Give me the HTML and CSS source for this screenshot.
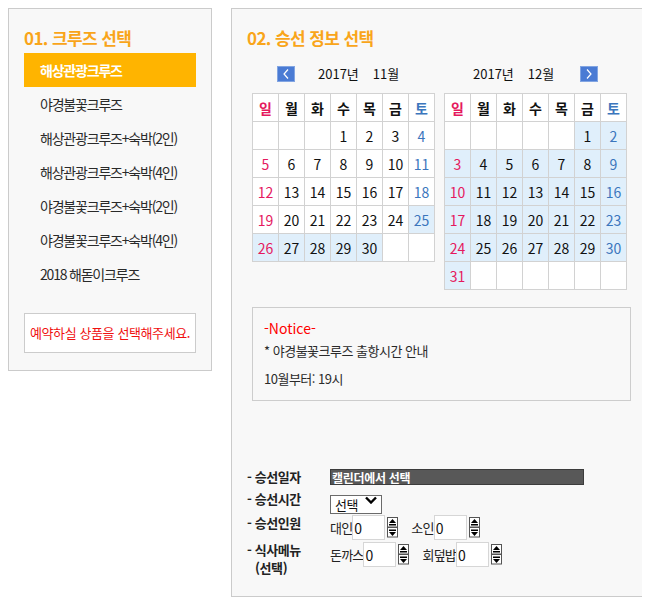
FILE: index.html
```html
<!DOCTYPE html>
<html lang="ko">
<head>
  <meta charset="UTF-8" />
  <title>크루즈 예약</title>
  <meta name="viewport" content="width=device-width, initial-scale=1.0" />
  <link rel="stylesheet" href="styles.css">
</head>
<body>
  <div class="wrap">
    <div class="panel cruise">
      <h2 class="step-title">01. 크루즈 선택</h2>
      <ul class="cruise-list">
        <li class="active">해상관광크루즈</li>
        <li>야경불꽃크루즈</li>
        <li>해상관광크루즈+숙박(2인)</li>
        <li>해상관광크루즈+숙박(4인)</li>
        <li>야경불꽃크루즈+숙박(2인)</li>
        <li>야경불꽃크루즈+숙박(4인)</li>
        <li>2018 해돋이크루즈</li>
      </ul>
      <div class="pick-msg">예약하실 상품을 선택해주세요.</div>
    </div>

    <div class="panel boarding">
      <h2 class="step-title step-title-cal">02. 승선 정보 선택</h2>

      <div class="cals">
        <div class="cal">
          <div class="cal-nav cal-nav-prev">
            <button class="nav-btn">
              <svg width="6" height="10" viewBox="0 0 6 10"><polyline points="5,0.5 1,5 5,9.5" fill="none" stroke="#fff" stroke-width="1.2"/></svg>
            </button>
            <span class="cal-title">2017년<span class="cal-month">11월</span></span>
          </div>
          <table class="cal-table" data-year="2017" data-month="11" data-from="25"></table>
        </div>
        <div class="cal">
          <div class="cal-nav cal-nav-next">
            <span class="cal-title">2017년<span class="cal-month">12월</span></span>
            <button class="nav-btn">
              <svg width="6" height="10" viewBox="0 0 6 10"><polyline points="1,0.5 5,5 1,9.5" fill="none" stroke="#fff" stroke-width="1.2"/></svg>
            </button>
          </div>
          <table class="cal-table" data-year="2017" data-month="12" data-from="1"></table>
        </div>
      </div>

      <div class="notice">
        <div class="notice-title">-Notice-</div>
        <p>* 야경불꽃크루즈 출항시간 안내</p>
        <p class="notice-time">10월부터: 19시</p>
      </div>

      <div class="order-form">
        <div class="form-label">- 승선일자</div>
        <div class="field">
          <input class="date-input" type="text" value="캘린더에서 선택" readonly />
        </div>

        <div class="form-label">- 승선시간</div>
        <div class="field">
          <span class="select-wrap">
            <select class="time-select"><option>선택</option></select>
            <svg class="select-arrow" width="12" height="8" viewBox="0 0 12 8"><polyline points="1,1.5 6,6.5 11,1.5" fill="none" stroke="#000" stroke-width="2.4"/></svg>
          </span>
        </div>

        <div class="form-label">- 승선인원</div>
        <div class="field">
          <span class="num-group">
            <span class="num-label">대인</span><input class="num" type="text" value="0" /><span class="spin"></span>
          </span>
          <span class="num-group">
            <span class="num-label">소인</span><input class="num" type="text" value="0" /><span class="spin"></span>
          </span>
        </div>

        <div class="form-label">- 식사메뉴<span class="sub">(선택)</span></div>
        <div class="field">
          <span class="num-group">
            <span class="num-label">돈까스</span><input class="num" type="text" value="0" /><span class="spin"></span>
          </span>
          <span class="num-group">
            <span class="num-label">회덮밥</span><input class="num" type="text" value="0" /><span class="spin"></span>
          </span>
        </div>
      </div>
    </div>
  </div>

  <script>
    const days = ['일', '월', '화', '수', '목', '금', '토'];
    const dayClass = (i) => i === 0 ? 'sun' : i === 6 ? 'sat' : '';

    document.querySelectorAll('.cal-table').forEach((table) => {
      const year = +table.dataset.year;
      const month = +table.dataset.month;
      const from = +table.dataset.from;
      const first = new Date(year, month - 1, 1).getDay();
      const last = new Date(year, month, 0).getDate();
      const weeks = Math.ceil((first + last) / 7);

      let html = '<tr>' + days.map((d, i) => `<th class="${dayClass(i)}">${d}</th>`).join('') + '</tr>';
      for (let w = 0; w < weeks; w++) {
        html += '<tr>';
        for (let i = 0; i < 7; i++) {
          const day = w * 7 + i - first + 1;
          if (day < 1 || day > last) {
            html += '<td></td>';
          } else {
            const cls = [dayClass(i), day >= from ? 'on' : ''].join(' ').trim();
            html += `<td class="${cls}">${day}</td>`;
          }
        }
        html += '</tr>';
      }
      table.innerHTML = html;
    });

    // number spinners
    const spin = '<svg width="11" height="21" viewBox="0 0 11 21">' +
      '<rect x="0.5" y="0.5" width="10" height="9.5" fill="#fff" stroke="#555"/>' +
      '<path d="M5.5 2 L9 6 H2 Z" fill="#000"/>' +
      '<rect x="2" y="7" width="7" height="1.5" fill="#000"/>' +
      '<rect x="0.5" y="10.5" width="10" height="9.5" fill="#fff" stroke="#555"/>' +
      '<rect x="2" y="12.5" width="7" height="1.5" fill="#000"/>' +
      '<path d="M2 15 H9 L5.5 19 Z" fill="#000"/>' +
      '</svg>';
    document.querySelectorAll('.spin').forEach((el) => el.innerHTML = spin);
  </script>
</body>
</html>
```

FILE: styles.css
```css
body {
  margin: 8px;
  font-family: "Noto Sans CJK KR", "Noto Sans", sans-serif;
  color: #222;
  background: #fff;
}
.wrap {
  display: flex;
  align-items: flex-start;
  gap: 19px;
}
.panel {
  flex-shrink: 0;
  background: #f8f8f8;
  border: 1px solid #cbcbcb;
  box-sizing: border-box;
}
.cruise {
  width: 204px;
  padding: 19px 15px 17px;
}
.boarding {
  width: 416px;
  padding: 19px 15px 19px;
}
.step-title {
  margin: 0 0 5px;
  font-size: 17px;
  line-height: 20px;
  font-weight: bold;
  letter-spacing: -0.6px;
  color: #f9a51a;
}
.step-title-cal {
  margin-bottom: 18px;
}
.cruise-list {
  list-style: none;
  margin: 0;
  padding: 0;
}
.cruise-list li {
  height: 34px;
  line-height: 34px;
  padding-left: 16px;
  font-size: 14px;
  letter-spacing: -1.2px;
  color: #2a2a2a;
}
.cruise-list li.active {
  background: #ffb400;
  color: #fff;
  font-weight: bold;
}
.pick-msg {
  margin-top: 22px;
  height: 40px;
  box-sizing: border-box;
  border: 1px solid #ccc;
  background: #fff;
  color: #f01010;
  font-size: 13px;
  letter-spacing: -0.4px;
  line-height: 38px;
  text-align: center;
}

/* calendars */
.cals {
  display: flex;
  align-items: flex-start;
  gap: 9px;
  margin-left: 5px;
}
.cal {
  width: 183px;
}
.cal-nav {
  display: flex;
  align-items: center;
  height: 16px;
  margin-bottom: 11px;
  font-size: 13px;
  line-height: 16px;
  color: #111;
}
.cal-nav-prev {
  padding-left: 25px;
  gap: 23px;
}
.cal-nav-next {
  padding-left: 29px;
  gap: 26px;
}
.cal-month {
  margin-left: 14px;
}
.nav-btn {
  width: 18px;
  height: 16px;
  padding: 0;
  background: #4a7bd4;
  border: 1px solid #82a5e2;
  display: flex;
  align-items: center;
  justify-content: center;
}
.cal-table {
  border-collapse: collapse;
  background: #fff;
}
.cal-table th,
.cal-table td {
  width: 25px;
  height: 27px;
  padding: 0;
  border: 1px solid #d2d2d2;
  text-align: center;
  font-size: 14px;
  color: #111;
}
.cal-table th {
  font-weight: bold;
}
.cal-table td.on {
  background: #e0effb;
}
.cal-table .sun {
  color: #e5195e;
}
.cal-table .sat {
  color: #3b76bd;
}

/* notice */
.notice {
  margin: 17px 0 0 5px;
  height: 94px;
  box-sizing: border-box;
  border: 1px solid #cdcdcd;
  padding: 10px 11px 12px;
}
.notice-title {
  font-size: 14px;
  line-height: 20px;
  color: #f00;
}
.notice p {
  margin: 4px 0 0;
  font-size: 13px;
  line-height: 18px;
  letter-spacing: -0.5px;
  color: #2a2a2a;
}
.notice .notice-time {
  margin-top: 10px;
}

/* form */
.order-form {
  display: grid;
  grid-template-columns: 83px 1fr;
  grid-template-rows: 22px 24px 27px auto;
  margin-top: 67px;
}
.form-label {
  font-size: 13px;
  font-weight: bold;
  line-height: 18px;
  letter-spacing: -0.4px;
  color: #222;
}
.form-label .sub {
  display: block;
  padding-left: 8px;
}
.field {
  display: flex;
  align-items: center;
  align-self: start;
  margin-top: 1px;
}
.date-input {
  width: 254px;
  height: 16px;
  box-sizing: border-box;
  padding: 0 1px;
  border: 1px solid #3c3c3c;
  background: #585858;
  color: #fff;
  font-family: inherit;
  font-size: 12px;
  font-weight: bold;
  letter-spacing: -0.3px;
  line-height: 14px;
}
.select-wrap {
  position: relative;
  display: inline-block;
}
.time-select {
  appearance: none;
  width: 52px;
  height: 19px;
  box-sizing: border-box;
  padding: 0 0 0 4px;
  border: 1px solid #6b6b6b;
  border-radius: 0;
  background: #fff;
  font-family: inherit;
  font-size: 13px;
  letter-spacing: -0.5px;
  line-height: 17px;
  color: #111;
}
.select-arrow {
  position: absolute;
  right: 5px;
  top: 5px;
}
.num-group {
  display: flex;
  align-items: center;
  margin-right: 13px;
}
.num-label {
  font-size: 13px;
  letter-spacing: -0.8px;
  color: #222;
}
.num {
  width: 33px;
  height: 25px;
  box-sizing: border-box;
  padding: 0 1px;
  border: 1px solid #d6d6d6;
  background: #fff;
  font-family: inherit;
  font-size: 14px;
  color: #111;
}
.spin {
  display: flex;
  margin-left: 2px;
}
```
